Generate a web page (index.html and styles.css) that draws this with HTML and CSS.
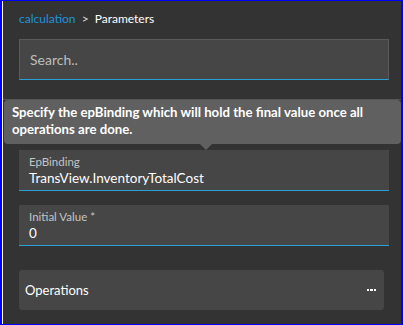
FILE: index.html
```html
<!DOCTYPE html>
<html lang="en">
<head>
  <meta charset="UTF-8" />
  <title>Parameters</title>
  <link rel="stylesheet" href="styles.css">
</head>
<body>

<div class="frame">
  <div class="screen">
    <div class="breadcrumb">
      <span class="crumb-link">calculation</span>
      <span class="crumb-sep">&gt;</span>
      <span class="crumb-current">Parameters</span>
    </div>

    <div class="search">
      <span class="placeholder">Search..</span>
    </div>

    <div class="divider"></div>

    <div class="field field-binding">
      <label>EpBinding</label>
      <div class="value">TransView.InventoryTotalCost</div>
    </div>

    <div class="field field-initial">
      <label>Initial Value *</label>
      <div class="value">0</div>
    </div>

    <div class="section">
      <span class="section-title">Operations</span>
      <svg class="more" width="9" height="3" viewBox="0 0 9 3">
        <rect x="0" y="0" width="2" height="2" />
        <rect x="3" y="0" width="3" height="2" />
        <rect x="7" y="0" width="2" height="2" />
      </svg>
    </div>

    <div class="tooltip">
      Specify the epBinding which will hold the final value once all operations are done.
    </div>
  </div>
</div>

</body>
</html>
```

FILE: styles.css
```css
:root {
  --bg: #333333;
  --field: #464646;
  --accent: #2a9fd8;
  --link: #1f94dc;
}

* { box-sizing: border-box; }

body {
  margin: 0;
  font-family: Lato, "Open Sans", sans-serif;
  background: #fff;
}

.frame {
  width: 403px;
  height: 325px;
  border: 1px solid #0000ff;
  border-left-width: 2px;
  border-right-width: 2px;
}

.screen {
  position: relative;
  height: 100%;
  background: var(--bg);
  border-left: 1px solid #fff;
  padding: 9px 12px 0 16px;
}

.breadcrumb {
  font-size: 12px;
  line-height: 18px;
  color: #fff;
}

.crumb-link { color: var(--link); }

.crumb-sep {
  margin: 0 3px;
  color: #ddd;
}

.search {
  margin-top: 11px;
  height: 41px;
  background: var(--field);
  border: 1px solid #5a5a5a;
  border-bottom-color: var(--accent);
  padding-left: 10px;
  display: flex;
  align-items: center;
}

.placeholder {
  font-size: 14px;
  color: #bdbdbd;
}

.divider {
  margin: 19px -12px 0 -16px;
  height: 1px;
  background: #555;
}

.field {
  height: 41px;
  background: var(--field);
  border-bottom: 1px solid var(--accent);
  padding: 4px 10px 0;
}

.field-binding { margin-top: 50px; }
.field-initial { margin-top: 14px; }

.field label {
  display: block;
  font-size: 11.5px;
  line-height: 15px;
  color: #c4c4c4;
}

.field .value {
  font-size: 13.5px;
  line-height: 18px;
  color: #fff;
}

.section {
  margin-top: 24px;
  width: 365px;
  height: 40px;
  background: var(--field);
  border-radius: 3px;
  padding: 0 8px 0 6px;
  display: flex;
  align-items: center;
  justify-content: space-between;
}

.section-title {
  font-size: 13px;
  color: #fff;
}

.more { fill: #fff; }

.tooltip {
  position: absolute;
  left: 1px;
  right: 0;
  top: 99px;
  height: 44px;
  padding: 4px 8px 0;
  background: #606060;
  border-radius: 4px;
  color: #fff;
  font-size: 13.2px;
  font-weight: bold;
  line-height: 17px;
}

.tooltip::after {
  content: "";
  position: absolute;
  left: 196px;
  bottom: -6px;
  border-left: 6px solid transparent;
  border-right: 6px solid transparent;
  border-top: 6px solid #606060;
}
```
